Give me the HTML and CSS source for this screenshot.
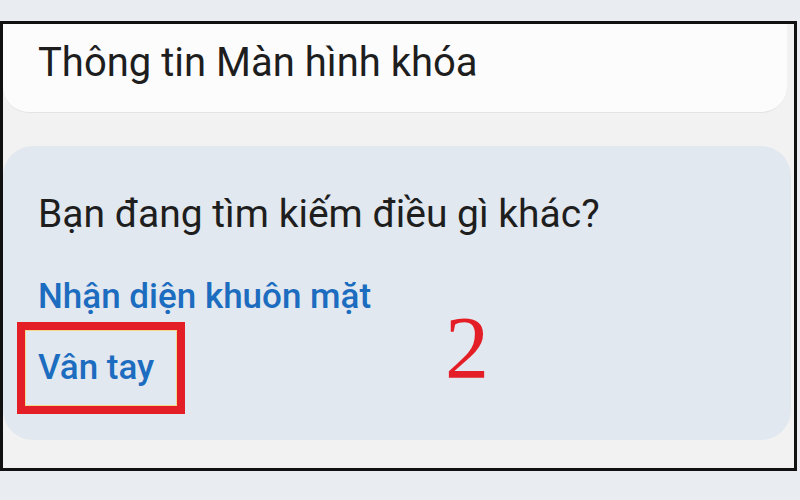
FILE: index.html
```html
<!DOCTYPE html>
<html lang="vi">
<head>
<meta charset="utf-8">
<title>Màn hình khóa</title>
<link rel="stylesheet" href="styles.css">
</head>
<body>
<div class="frame">
  <div class="card-top">
    <div class="title">Thông tin Màn hình khóa</div>
  </div>
  <div class="card-help">
    <div class="question">Bạn đang tìm kiếm điều gì khác?</div>
    <div class="link">Nhận diện khuôn mặt</div>
    <div class="highlight"><span class="link">Vân tay</span></div>
    <div class="step">2</div>
  </div>
</div>
</body>
</html>
```

FILE: styles.css
```css
html, body {
  margin: 0;
  padding: 0;
}
body {
  background: #e9ecf0;
  width: 800px;
  height: 500px;
  overflow: hidden;
  font-family: Roboto, "Noto Sans", sans-serif;
}
.frame {
  box-sizing: border-box;
  margin-top: 21px;
  width: 797px;
  height: 450px;
  border: 3px solid #111;
  background: #f2f2f2;
  display: flex;
  flex-direction: column;
}
.card-top {
  box-sizing: border-box;
  height: 89px;
  margin-right: 7px;
  background: #fcfcfc;
  border-radius: 0 0 26px 26px;
  border-bottom: 1px solid #e4e4e4;
  padding: 15px 0 0 35px;
}
.title {
  font-size: 40px;
  line-height: 48px;
  color: #1e1e1e;
}
.card-help {
  position: relative;
  box-sizing: border-box;
  margin-top: 33px;
  margin-right: 3px;
  height: 294px;
  background: #e2e8ef;
  border-radius: 30px;
  padding: 45px 0 0 35px;
}
.question {
  font-size: 39px;
  line-height: 46px;
  color: #1e1e1e;
}
.link {
  font-size: 35px;
  line-height: 41px;
  font-weight: 500;
  color: #1c6cc0;
}
.question + .link {
  margin-top: 39px;
}
.highlight {
  display: inline-block;
  margin: 5px 0 0 -21px;
  border: 8px solid #e41e26;
  outline: 1px solid #f4d98c;
  outline-offset: -9px;
  padding: 17px 23px 18px 13px;
}
.highlight .link {
  display: block;
}
.step {
  position: absolute;
  left: 442px;
  top: 158px;
  font-family: "Liberation Serif", serif;
  font-size: 88px;
  line-height: 88px;
  color: #e41e26;
}
```
